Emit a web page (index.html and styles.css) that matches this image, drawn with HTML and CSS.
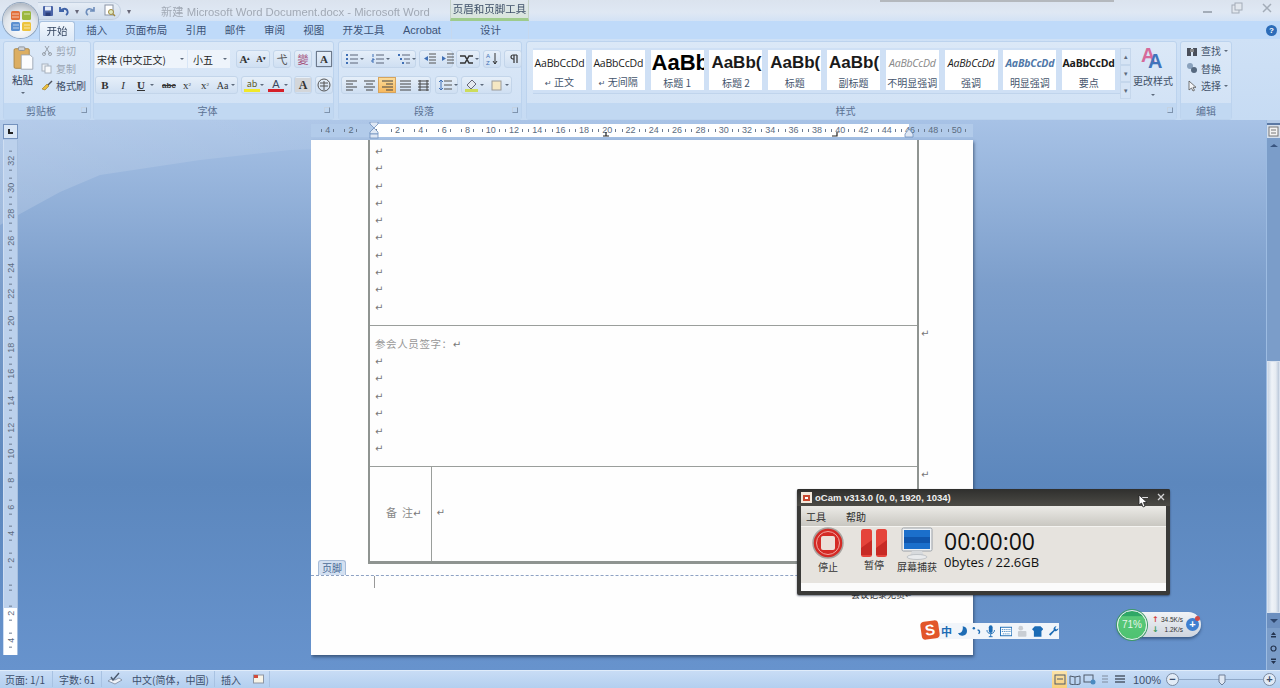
FILE: index.html
```html
<!DOCTYPE html>
<html lang="zh-CN">
<head>
    <meta charset="UTF-8">
    <meta name="viewport" content="width=device-width, initial-scale=1.0">
    <title>新建 Microsoft Word Document.docx - Microsoft Word</title>
    <link rel="stylesheet" href="styles.css">
</head>
<body>
<div class="app">
    <!-- title bar -->
    <header class="titlebar">
        <div class="orb">
            <svg width="28" height="28" viewBox="0 0 28 28">
                <rect x="4" y="4" width="9" height="9" rx="1.5" fill="#e2703a"/>
                <rect x="15" y="4" width="9" height="9" rx="1.5" fill="#9bb83f"/>
                <rect x="4" y="15" width="9" height="9" rx="1.5" fill="#5b8fd0"/>
                <rect x="15" y="15" width="9" height="9" rx="1.5" fill="#edc33c"/>
                <path d="M5 7h7M5 10h7M17 7h6M17 18h6M17 21h6M6 18h6M6 21h6" stroke="#fff" stroke-opacity=".6"/>
            </svg>
        </div>
        <div class="qat">
            <svg width="12" height="12" viewBox="0 0 12 12"><rect x="1" y="1" width="10" height="10" rx="1" fill="#4a64a8"/><rect x="3" y="1.5" width="6" height="4" fill="#e8eef8"/><rect x="3.5" y="7.5" width="5" height="3.5" fill="#2c3f78"/></svg>
            <svg width="13" height="12" viewBox="0 0 13 12"><path d="M2 2v4h4M2.500 6c2-3 6-3 7 0 .5 1.500 0 3-1.500 4" fill="none" stroke="#3f63a8" stroke-width="1.800"/></svg>
            <span class="qat-arrow">▾</span>
            <svg width="13" height="12" viewBox="0 0 13 12"><path d="M11 2v4H7M10.500 6c-2-3-6-3-7 0-.5 1.500 0 3 1.500 4" fill="none" stroke="#6d8dbb" stroke-width="1.600"/></svg>
            <svg class="qat-preview" width="13" height="13" viewBox="0 0 13 13"><rect x="2" y="1" width="8" height="10" fill="#fff" stroke="#8a94a5"/><circle cx="8" cy="8" r="2.500" fill="#dfe8c0" stroke="#a08a40"/><path d="M10 10l2 2" stroke="#a08a40" stroke-width="1.500"/></svg>
        </div>
        <span class="qat-more">▾</span>
        <div class="doc-title">新建 Microsoft Word Document.docx - Microsoft Word</div>
        <div class="context-title">页眉和页脚工具</div>
        <div class="top-shadow"></div>
        <div class="win-controls">
            <span class="win-min"></span>
            <svg width="12" height="12" viewBox="0 0 12 12"><rect x="1" y="3" width="7" height="8" fill="#e2e7ee" stroke="#a3acb8"/><rect x="4" y="1" width="7" height="7" fill="#e2e7ee" stroke="#a3acb8"/></svg>
            <svg width="10" height="10" viewBox="0 0 10 10"><path d="M1 1l8 8M9 1l-8 8" stroke="#a3acb8" stroke-width="1.500"/></svg>
        </div>
    </header>

    <!-- tabs -->
    <nav class="tabs">
        <span class="tab tab-active">开始</span>
        <span class="tab tab-w39">插入</span>
        <span class="tab tab-w60">页面布局</span>
        <span class="tab tab-w39">引用</span>
        <span class="tab tab-w39">邮件</span>
        <span class="tab tab-w39">审阅</span>
        <span class="tab tab-w39">视图</span>
        <span class="tab tab-w60">开发工具</span>
        <span class="tab tab-w58">Acrobat</span>
        <span class="tab tab-design">设计</span>
        <span class="help">?</span>
    </nav>

    <!-- ribbon -->
    <section class="ribbon">
        <div class="group g-clip">
            <div class="group-body clip-body">
                <div class="paste">
                    <svg width="22" height="25" viewBox="0 0 24 28"><rect x="2" y="3" width="17" height="22" rx="1.500" fill="#dcae62" stroke="#a98545"/><rect x="7" y="1" width="7" height="4" rx="1" fill="#cfd3d8" stroke="#8a8f96"/><path d="M10 10h10l3 3v13H10z" fill="#fbfcfe" stroke="#9aa4b2"/></svg>
                    <span>粘贴</span>
                    <i class="mini-arrow"></i>
                </div>
                <div class="clip-list">
                    <span class="clip-item off"><svg width="12" height="11" viewBox="0 0 12 11"><path d="M3 9l5-8M9 9L4 1" stroke="#9aa2ac" fill="none"/><circle cx="3" cy="9" r="1.500" fill="none" stroke="#9aa2ac"/><circle cx="9" cy="9" r="1.500" fill="none" stroke="#9aa2ac"/></svg>剪切</span>
                    <span class="clip-item off"><svg width="12" height="11" viewBox="0 0 12 11"><rect x="1" y="1" width="6" height="7" fill="#eef2f7" stroke="#a8b2be"/><rect x="4" y="3" width="6" height="7" fill="#f7f9fb" stroke="#a8b2be"/></svg>复制</span>
                    <span class="clip-item"><svg width="12" height="11" viewBox="0 0 12 11"><path d="M11 1L6 6" stroke="#50545e" stroke-width="1.500"/><path d="M6 4L1 9l3 1 4-4z" fill="#e9bd3d" stroke="#97772a" stroke-width=".6"/></svg>格式刷</span>
                </div>
            </div>
            <div class="group-label">剪贴板<i class="launcher"></i></div>
        </div>

        <div class="group g-font">
            <div class="group-body rows">
                <div class="row">
                    <div class="field field-font">宋体 (中文正文)<i class="mini-arrow"></i></div>
                    <div class="field field-size">小五<i class="mini-arrow"></i></div>
                    <div class="btn-set set-grow"><b class="rb rb-serif">A<sup>▴</sup></b><b class="rb rb-serif rb-sm">A<sup>▾</sup></b></div>
                    <div class="btn-set set-one"><span class="rb rb-cjk">弋</span></div>
                    <div class="btn-set set-one"><span class="rb rb-cjk rb-pink">變</span></div>
                    <div class="btn-set set-one"><span class="rb rb-boxed">A</span></div>
                </div>
                <div class="row">
                    <div class="btn-set set-format">
                        <b class="rb rb-serif">B</b><i class="rb rb-serif">I</i><b class="rb rb-serif rb-u">U</b><i class="mini-arrow arrow-gap"></i>
                        <span class="rb rb-strike">abc</span><span class="rb rb-serif">x<sub>2</sub></span><span class="rb rb-serif">x<sup>2</sup></span><span class="rb rb-serif rb-aa">Aa</span><i class="mini-arrow"></i>
                    </div>
                    <div class="btn-set set-color">
                        <span class="rb rb-high">ab</span><i class="mini-arrow arrow-gap4"></i>
                        <span class="rb rb-red">A</span><i class="mini-arrow"></i>
                    </div>
                    <div class="btn-set set-one"><span class="rb rb-shade">A</span></div>
                    <div class="btn-set set-one">
                        <span class="rb"><svg width="14" height="14" viewBox="0 0 14 14"><circle cx="7" cy="7" r="6" fill="none" stroke="#555"/><path d="M3 5h8M3 8h8M7 3v9" stroke="#555"/></svg></span>
                    </div>
                </div>
            </div>
            <div class="group-label">字体<i class="launcher"></i></div>
        </div>

        <div class="group g-para">
            <div class="group-body rows">
                <div class="row">
                    <div class="btn-set set-lists">
                        <span class="rb"><svg width="13" height="12" viewBox="0 0 13 12"><path d="M5 2h8M5 6h8M5 10h8" stroke="#5a6478"/><path d="M1 2h2M1 6h2M1 10h2" stroke="#3f6fb5" stroke-width="2"/></svg></span><i class="mini-arrow arrow-gap4"></i>
                        <span class="rb"><svg width="13" height="12" viewBox="0 0 13 12"><path d="M5 2h8M5 6h8M5 10h8" stroke="#5a6478"/><path d="M2 1v3M1 6h2v1H1v2h2" stroke="#3f6fb5" fill="none"/></svg></span><i class="mini-arrow arrow-gap4"></i>
                        <span class="rb"><svg width="13" height="12" viewBox="0 0 13 12"><path d="M5 2h8M7 6h6M9 10h4" stroke="#5a6478"/><path d="M1 2h2M3 6h2M5 10h2" stroke="#3f6fb5" stroke-width="2"/></svg></span><i class="mini-arrow"></i>
                    </div>
                    <div class="btn-set set-indent">
                        <span class="rb"><svg width="13" height="12" viewBox="0 0 13 12"><path d="M6 1h7M6 4h7M6 7h7M6 10h7" stroke="#555"/><path d="M5 3L1 5.500 5 8z" fill="#3f6fb5"/></svg></span>
                        <span class="rb"><svg width="13" height="12" viewBox="0 0 13 12"><path d="M6 1h7M6 4h7M6 7h7M6 10h7" stroke="#555"/><path d="M1 3l4 2.500L1 8z" fill="#3f6fb5"/></svg></span>
                    </div>
                    <div class="btn-set set-x">
                        <span class="rb"><svg width="14" height="12" viewBox="0 0 14 12"><path d="M1 3h5l4 7h4M1 10h5l4-7h4" fill="none" stroke="#333" stroke-width="1.500"/></svg></span><i class="mini-arrow"></i>
                    </div>
                    <div class="btn-set set-sort">
                        <span class="rb"><svg width="14" height="14" viewBox="0 0 14 14"><text x="1" y="6" font-size="6" font-family="Liberation Sans" fill="#3f6fb5">A</text><text x="1" y="13" font-size="6" font-family="Liberation Sans" fill="#3f6fb5">Z</text><path d="M10 1v11M8 9l2 3 2-3" fill="none" stroke="#333"/></svg></span>
                    </div>
                    <div class="btn-set set-sort">
                        <span class="rb"><svg width="12" height="12" viewBox="0 0 12 12"><path d="M7 2v8M10 2v8M10 2H6a2 2 0 0 0 0 4h1" fill="none" stroke="#333" stroke-width="1.200"/></svg></span>
                    </div>
                </div>
                <div class="row">
                    <div class="btn-set set-align">
                        <span class="rb"><svg width="13" height="11" viewBox="0 0 13 11"><path d="M1 1h11M1 4h7M1 7h11M1 10h7" stroke="#444" stroke-width="1.200"/></svg></span>
                        <span class="rb"><svg width="13" height="11" viewBox="0 0 13 11"><path d="M1 1h11M3 4h7M1 7h11M3 10h7" stroke="#444" stroke-width="1.200"/></svg></span>
                        <span class="rb rb-on"><svg width="13" height="11" viewBox="0 0 13 11"><path d="M1 1h11M5 4h7M1 7h11M5 10h7" stroke="#444" stroke-width="1.200"/></svg></span>
                        <span class="rb"><svg width="13" height="11" viewBox="0 0 13 11"><path d="M1 1h11M1 4h11M1 7h11M1 10h11" stroke="#444" stroke-width="1.200"/></svg></span>
                        <span class="rb"><svg width="13" height="11" viewBox="0 0 13 11"><path d="M1 1h11M1 4h11M1 7h11M1 10h11M3 0v11M10 0v11" stroke="#444"/></svg></span>
                    </div>
                    <div class="btn-set set-spacing">
                        <span class="rb"><svg width="14" height="12" viewBox="0 0 14 12"><path d="M6 2h8M6 6h8M6 10h8" stroke="#555"/><path d="M3 1v10M1 3l2-2 2 2M1 9l2 2 2-2" fill="none" stroke="#3f6fb5"/></svg></span><i class="mini-arrow"></i>
                    </div>
                    <div class="btn-set set-shade">
                        <span class="rb"><svg width="15" height="14" viewBox="0 0 15 14"><path d="M3 7l5-5 4 4-5 5z" fill="#e4e8ee" stroke="#667"/><rect x="1" y="11" width="13" height="3" fill="#cddc5b"/></svg></span><i class="mini-arrow arrow-gap3"></i>
                        <span class="rb"><svg width="13" height="13" viewBox="0 0 13 13"><rect x="2" y="2" width="9" height="9" fill="#f5e7c3" stroke="#9a9a9a"/></svg></span><i class="mini-arrow"></i>
                    </div>
                </div>
            </div>
            <div class="group-label">段落<i class="launcher"></i></div>
        </div>

        <div class="group g-styles">
            <div class="group-body styles-body">
                <div class="gallery">
                    <div class="style-card"><span class="sample s-normal">AaBbCcDd</span><span class="style-name"><i class="enter">↵</i> 正文</span></div>
                    <div class="style-card"><span class="sample s-normal">AaBbCcDd</span><span class="style-name"><i class="enter">↵</i> 无间隔</span></div>
                    <div class="style-card"><span class="sample s-h1">AaBb</span><span class="style-name">标题 1</span></div>
                    <div class="style-card"><span class="sample s-h2">AaBb(</span><span class="style-name">标题 2</span></div>
                    <div class="style-card"><span class="sample s-h2">AaBb(</span><span class="style-name">标题</span></div>
                    <div class="style-card"><span class="sample s-h2">AaBb(</span><span class="style-name">副标题</span></div>
                    <div class="style-card"><span class="sample s-normal s-subtle">AaBbCcDd</span><span class="style-name">不明显强调</span></div>
                    <div class="style-card"><span class="sample s-normal s-em">AaBbCcDd</span><span class="style-name">强调</span></div>
                    <div class="style-card"><span class="sample s-normal s-intense">AaBbCcDd</span><span class="style-name">明显强调</span></div>
                    <div class="style-card"><span class="sample s-normal s-strong">AaBbCcDd</span><span class="style-name">要点</span></div>
                </div>
                <div class="gallery-scroll">
                    <span>▴</span><span>▾</span><span>▾</span>
                </div>
                <div class="change-style">
                    <svg width="24" height="26" viewBox="0 0 24 26"><text x="0" y="17" font-size="20" font-weight="700" font-family="Liberation Sans" fill="#d66a9a">A</text><text x="7" y="23" font-size="20" font-weight="700" font-family="Liberation Sans" fill="#3f74bb">A</text></svg>
                    <span>更改样式</span>
                    <i class="mini-arrow"></i>
                </div>
            </div>
            <div class="group-label">样式<i class="launcher"></i></div>
        </div>

        <div class="group g-edit">
            <div class="group-body edit-body">
                <span class="edit-item"><svg width="12" height="12" viewBox="0 0 12 12"><rect x="1" y="3" width="4" height="8" fill="#4a4f5a"/><rect x="7" y="3" width="4" height="8" fill="#4a4f5a"/><rect x="4" y="4" width="4" height="3" fill="#888"/></svg>查找<i class="mini-arrow"></i></span>
                <span class="edit-item"><svg width="12" height="12" viewBox="0 0 12 12"><circle cx="4" cy="4" r="3" fill="#8aa2bd"/><circle cx="8" cy="8" r="3" fill="#56697f"/></svg>替换</span>
                <span class="edit-item"><svg width="12" height="12" viewBox="0 0 12 12"><path d="M3 1v9l2.500-2 1.500 3 1.500-.7-1.500-3H10z" fill="#f4f6f9" stroke="#555" stroke-width=".8"/></svg>选择<i class="mini-arrow"></i></span>
            </div>
            <div class="group-label label-plain">编辑</div>
        </div>
    </section>

    <!-- document area -->
    <main class="work">
        <div class="swoosh"></div>
        <div class="left-rail">
            <div class="tab-stop"><span></span></div>
            <div class="vruler">
                <span>32</span><span>30</span><span>28</span><span>26</span><span>24</span><span>22</span><span>20</span><span>18</span><span>16</span><span>14</span><span>12</span><span>10</span><span>8</span><span>6</span><span>4</span><span>2</span><span></span><span>2</span><span>4</span>
            </div>
        </div>
        <div class="doc-col">
            <div class="hruler">
                <span>4</span><span>2</span><span></span><span>2</span><span>4</span><span>6</span><span>8</span><span>10</span><span>12</span><span>14</span><span>16</span><span>18</span><span>20</span><span>22</span><span>24</span><span>26</span><span>28</span><span>30</span><span>32</span><span>34</span><span>36</span><span>38</span><span>40</span><span>42</span><span>44</span><span>46</span><span>48</span><span>50</span>
                <svg class="marker marker-indent" width="10" height="17" viewBox="0 0 10 17"><path d="M1 0h8v2L5 6 1 2zM5 6l4 4v2H1v-2z" fill="#dfe8f5" stroke="#6e8fbd" stroke-width=".8"/><rect x="1" y="12" width="8" height="4" fill="#dfe8f5" stroke="#6e8fbd" stroke-width=".8"/></svg>
                <svg class="marker marker-tab1" width="6" height="5" viewBox="0 0 6 5"><path d="M3 0v4M0 4h6" stroke="#222" stroke-width="1.200"/></svg>
                <svg class="marker marker-tab2" width="6" height="5" viewBox="0 0 6 5"><path d="M5 0v4H0" fill="none" stroke="#222" stroke-width="1.200"/></svg>
                <svg class="marker marker-right" width="10" height="9" viewBox="0 0 10 9"><path d="M5 0l4 5v3H1V5z" fill="#dfe8f5" stroke="#6e8fbd" stroke-width=".8"/></svg>
            </div>
            <div class="page">
                <div class="body-part">
                    <table class="sheet">
                        <colgroup><col class="col-head"><col></colgroup>
                        <tr class="row-top">
                            <td colspan="2">
                                <p class="mark">↵</p><p class="mark">↵</p><p class="mark">↵</p><p class="mark">↵</p><p class="mark">↵</p>
                                <p class="mark">↵</p><p class="mark">↵</p><p class="mark">↵</p><p class="mark">↵</p><p class="mark">↵</p>
                            </td>
                        </tr>
                        <tr class="row-sign">
                            <td colspan="2">
                                <p class="sign-title">参会人员签字：<i>↵</i></p>
                                <p class="mark">↵</p><p class="mark">↵</p><p class="mark">↵</p><p class="mark">↵</p><p class="mark">↵</p><p class="mark">↵</p>
                            </td>
                        </tr>
                        <tr class="row-note">
                            <td class="note-head">备&nbsp;&nbsp;注<i>↵</i></td>
                            <td class="note-cell"><i>↵</i></td>
                        </tr>
                    </table>
                    <span class="row-end end-sign">↵</span>
                    <span class="row-end end-note">↵</span>
                </div>
                <div class="footer-part">
                    <span class="footer-tab">页脚</span>
                    <div class="footer-rule"></div>
                    <div class="caret"></div>
                    <p class="footer-text">会议记录无责↵</p>
                </div>
            </div>
        </div>
        <aside class="scrollbar">
            <span class="split"></span>
            <span class="ruler-toggle"><svg width="11" height="11" viewBox="0 0 11 11"><rect x="1" y="1" width="9" height="9" fill="#f3f3f3" stroke="#777"/><path d="M3 4h5M3 7h5" stroke="#777"/></svg></span>
            <span class="sb-arrow sb-up"></span>
            <span class="sb-track sb-track-top"></span>
            <span class="sb-thumb"></span>
            <span class="sb-down"><i></i></span>
            <span class="sb-dot"><svg width="7" height="7" viewBox="0 0 7 7"><path d="M3.500 1L6 4H1zM1 5h5v1.500H1z" fill="#24344f"/></svg></span>
            <span class="sb-dot"><svg width="7" height="7" viewBox="0 0 7 7"><circle cx="3.500" cy="3.500" r="2.500" fill="none" stroke="#24344f" stroke-width="1.200"/></svg></span>
            <span class="sb-dot"><svg width="7" height="7" viewBox="0 0 7 7"><path d="M3.500 6L6 3H1zM1 .5h5V2H1z" fill="#24344f"/></svg></span>
        </aside>

        <!-- floating windows on top of Word -->
        <div class="ocam">
            <div class="ocam-title">
                <svg width="11" height="11" viewBox="0 0 11 11"><rect width="11" height="11" fill="#f3e9dc"/><rect x="2" y="3" width="7" height="6" fill="#c8482e"/><rect x="4" y="5" width="3" height="2" fill="#fff"/></svg>
                <span>oCam v313.0 (0, 0, 1920, 1034)</span>
                <em class="ocam-min"></em>
                <svg class="ocam-close" width="8" height="8" viewBox="0 0 8 8"><path d="M1 1l6 6M7 1L1 7" stroke="#d5d5d5" stroke-width="1.300"/></svg>
            </div>
            <div class="ocam-menu"><span>工具</span><span>帮助</span></div>
            <div class="ocam-tools">
                <div class="ocam-btn btn-stop">
                    <svg width="32" height="32" viewBox="0 0 32 32"><circle cx="16" cy="16" r="15" fill="#d42a25" stroke="#a8a4a0" stroke-width="1.500"/><circle cx="16" cy="16" r="11.500" fill="none" stroke="#f3a5a0"/><rect x="9" y="9" width="14" height="14" rx="2" fill="#ecdfd8"/></svg>
                    <span>停止</span>
                </div>
                <div class="ocam-btn btn-pause">
                    <svg width="26" height="30" viewBox="0 0 26 30"><rect x="0" y="1" width="11" height="28" rx="2.500" fill="#e5443b"/><rect x="15" y="1" width="11" height="28" rx="2.500" fill="#e5443b"/><path d="M0 20l11-8v15H0zM15 20l11-8v15H15z" fill="#c72a25"/></svg>
                    <span>暂停</span>
                </div>
                <div class="ocam-btn btn-screen">
                    <svg width="32" height="33" viewBox="0 0 32 33"><rect x="1" y="1" width="30" height="23" rx="1.500" fill="#f0f2f4" stroke="#9aa0a6"/><rect x="3" y="3" width="26" height="19" fill="#1b6fcb"/><rect x="3" y="10" width="26" height="6" fill="#0f55ac"/><path d="M11 24h10l2 5H9z" fill="#d7dadd"/><ellipse cx="16" cy="30" rx="10" ry="2.500" fill="#e9ebed" stroke="#a8adb2" stroke-width=".6"/></svg>
                    <span>屏幕捕获</span>
                </div>
                <div class="ocam-status">
                    <div class="ocam-time">00:00:00</div>
                    <div class="ocam-size">0bytes / 22.6GB</div>
                </div>
            </div>
            <div class="ocam-strip"></div>
        </div>
        <svg class="cursor" width="10" height="14" viewBox="0 0 10 14"><path d="M1 1v10l2.500-2 1.500 4 2-.8-1.500-3.700H9z" fill="#fff" stroke="#222" stroke-width=".8"/></svg>

        <div class="sogou">
            <span class="sogou-logo">S</span>
            <span class="sogou-cn">中</span>
            <svg width="11" height="12" viewBox="0 0 11 12"><path d="M6 1a5 5 0 1 1-5 7c3 1 6-2 5-7z" fill="#1d6cb5"/></svg>
            <svg width="11" height="12" viewBox="0 0 11 12"><circle cx="3" cy="3" r="1.300" fill="#1d6cb5"/><path d="M7 5c2 0 3 2 1 4" fill="none" stroke="#1d6cb5" stroke-width="1.500"/></svg>
            <svg width="10" height="13" viewBox="0 0 10 13"><rect x="3" y="0" width="4" height="8" rx="2" fill="#1d6cb5"/><path d="M1 5c0 5 8 5 8 0M5 9v3M3 12h4" fill="none" stroke="#1d6cb5"/></svg>
            <svg width="13" height="11" viewBox="0 0 13 11"><rect x=".5" y="1" width="12" height="9" fill="#fff" stroke="#1d6cb5"/><path d="M2 3.500h9M2 5.500h9M3 8h7" stroke="#1d6cb5" stroke-dasharray="1 1"/></svg>
            <svg width="11" height="12" viewBox="0 0 11 12"><circle cx="4" cy="3" r="2.500" fill="#c9ced4"/><rect x="1" y="6" width="9" height="6" rx="1" fill="#c9ced4"/></svg>
            <svg width="12" height="11" viewBox="0 0 12 11"><path d="M3 0h6l3 3-2 2v6H2V5L0 3z" fill="#1d6cb5"/></svg>
            <svg width="12" height="12" viewBox="0 0 12 12"><path d="M11 3a3 3 0 0 1-4 3L2.500 11 1 9.500 6 5a3 3 0 0 1 3-4L7.500 3 9 4.500z" fill="#1d6cb5"/></svg>
        </div>

        <div class="net">
            <div class="net-ball">71%</div>
            <div class="net-rates">
                <span><i class="up">↑</i>34.5K/s</span>
                <span><i class="down">↓</i>1.2K/s</span>
            </div>
            <span class="net-plus">+</span>
        </div>
    </main>

    <!-- status bar -->
    <footer class="status">
        <span class="st st-page">页面: 1/1</span>
        <span class="st st-count">字数: 61</span>
        <span class="st st-check"><svg width="16" height="14" viewBox="0 0 16 14"><path d="M1 9l7 3 7-4-3-2-4 2-4-1z" fill="#eef2f8" stroke="#6b7a90" stroke-width=".7"/><path d="M4 5l2 3 6-7" fill="none" stroke="#4c5a6e" stroke-width="1.400"/></svg></span>
        <span class="st st-lang">中文(简体，中国)</span>
        <span class="st st-insert">插入<svg width="11" height="10" viewBox="0 0 11 10"><rect x=".5" y="1" width="10" height="8" fill="#f7f4e8" stroke="#8e96a3"/><rect x="1" y="1" width="4" height="3" fill="#d24a3a"/></svg></span>
        <div class="st-right">
            <div class="views">
                <span class="view view-on"><svg width="12" height="11" viewBox="0 0 12 11"><rect x="1" y="1" width="10" height="9" fill="none" stroke="#4f5a6b"/><path d="M3 5h6" stroke="#4f5a6b"/></svg></span>
                <span class="view"><svg width="12" height="11" viewBox="0 0 12 11"><path d="M1 2l5 1 5-1v8l-5 1-5-1zM6 3v8" fill="none" stroke="#4f5a6b"/></svg></span>
                <span class="view"><svg width="13" height="11" viewBox="0 0 13 11"><rect x="1" y="1" width="9" height="7" fill="none" stroke="#4f5a6b"/><circle cx="10" cy="8" r="2.500" fill="#4a8ac0"/></svg></span>
                <span class="view"><svg width="12" height="11" viewBox="0 0 12 11"><path d="M3 2h6M3 5h6M3 8h6" stroke="#7f8a9c"/></svg></span>
                <span class="view"><svg width="12" height="11" viewBox="0 0 12 11"><path d="M1 2h10M1 5h10M1 8h10" stroke="#4f5a6b" stroke-width="1.500"/></svg></span>
            </div>
            <span class="zoom-pct">100%</span>
            <span class="zoom-btn">−</span>
            <div class="zoom-slider"><svg width="8" height="12" viewBox="0 0 8 12"><path d="M1 1h6v7l-3 3-3-3z" fill="#dfe7f2" stroke="#6e7f98"/></svg></div>
            <span class="zoom-btn">+</span>
        </div>
    </footer>
</div>
</body>
</html>
```

FILE: styles.css
```css
* {
    box-sizing: border-box;
}
html, body {
    margin: 0;
    padding: 0;
    overflow: hidden;
}
i {
    font-style: normal;
}
p {
    margin: 0;
}
.app {
    width: 1280px;
    height: 688px;
    display: flex;
    flex-direction: column;
    overflow: hidden;
    font-family: "Noto Sans CJK SC", "Liberation Sans", sans-serif;
    font-size: 10px;
    color: #44546c;
    filter: blur(0.5px);
}

/* title bar */
.titlebar {
    position: relative;
    height: 21px;
    flex-shrink: 0;
    background: linear-gradient(#dbe3ee, #dfe8f4 60%, #d3e2f5);
    display: flex;
    align-items: center;
}
.orb {
    position: absolute;
    left: 3px;
    top: 3px;
    width: 35px;
    height: 35px;
    z-index: 3;
    border-radius: 50%;
    display: flex;
    align-items: center;
    justify-content: center;
    background: radial-gradient(circle at 50% 70%, #fff, #dfe4ea 55%, #8d96a3);
    box-shadow: 0 0 0 1px #8fa3bb;
}
.qat {
    margin-left: 38px;
    width: 83px;
    height: 18px;
    padding-left: 4px;
    display: flex;
    align-items: center;
    gap: 4px;
    border-radius: 0 10px 10px 0;
    background: linear-gradient(#e6edf6, #cfdcec);
    border: 1px solid #c2cfdf;
    border-left: none;
}
.qat-arrow, .qat-more {
    font-size: 8px;
    color: #667;
}
.qat-preview {
    margin-left: 3px;
}
.qat-more {
    margin-left: 6px;
}
.doc-title {
    margin-left: 30px;
    width: 270px;
    font-family: "Liberation Sans", "Noto Sans CJK SC", sans-serif;
    font-size: 11.3px;
    color: #a1a9b5;
    white-space: nowrap;
}
.context-title {
    margin-left: 19px;
    width: 79px;
    height: 21px;
    font-size: 10.500px;
    line-height: 18px;
    text-align: center;
    color: #3d4f68;
    background: linear-gradient(#dfe7ee, #d9e5dc);
    border-bottom: 3px solid #9ecb8c;
    border-left: 1px solid #c5d2c8;
    border-right: 1px solid #c5d2c8;
}
.top-shadow {
    position: absolute;
    left: 880px;
    top: 0;
    width: 234px;
    height: 2px;
    background: #b4b8bd;
}
.win-controls {
    position: absolute;
    right: 8px;
    top: 2px;
    display: flex;
    align-items: center;
    gap: 19px;
}
.win-min {
    width: 9px;
    height: 2px;
    margin-top: 8px;
    background: #a3acb8;
}

/* tabs */
.tabs {
    height: 18px;
    flex-shrink: 0;
    padding-left: 39px;
    display: flex;
    background: #bfdaf9;
    position: relative;
    font-size: 10.500px;
    color: #3c5377;
}
.tab {
    text-align: center;
    line-height: 18px;
    white-space: nowrap;
}
.tab-active {
    width: 36px;
    height: 20px;
    background: linear-gradient(#f2f7fd, #dbe8f7);
    border: 1px solid #a9c2e0;
    border-bottom: none;
    border-radius: 3px 3px 0 0;
    color: #33445f;
    margin-right: 2px;
    position: relative;
    z-index: 2;
}
.tab-w39 {
    width: 39.3px;
}
.tab-w60 {
    width: 60px;
}
.tab-w58 {
    width: 57px;
    font-family: "Liberation Sans", sans-serif;
    font-size: 11px;
}
.tab-design {
    width: 78px;
    margin-left: 1px;
    border-left: 1px solid #c5d8ef;
    border-right: 1px solid #c5d8ef;
}
.help {
    position: absolute;
    right: 3px;
    top: 4px;
    width: 11px;
    height: 11px;
    border-radius: 50%;
    background: #2c6cb8;
    color: #fff;
    font-size: 8px;
    line-height: 11px;
    text-align: center;
    font-family: "Liberation Sans", sans-serif;
    font-weight: 700;
}

/* ribbon */
.ribbon {
    height: 81px;
    flex-shrink: 0;
    padding: 2px 0 0 3px;
    display: flex;
    background: linear-gradient(#cfe1f6, #c6dbf3);
}
.group {
    display: flex;
    flex-direction: column;
    margin-right: 3px;
    border-radius: 3px;
    border: 1px solid #bcd3ee;
    background: linear-gradient(#dbe8f7, #d0e1f5);
}
.g-clip {
    width: 88px;
    margin-right: 2px;
}
.g-font {
    width: 241px;
    margin-right: 4px;
}
.g-para {
    width: 184px;
    margin-right: 4px;
}
.g-styles {
    width: 651px;
}
.g-edit {
    width: 52px;
}
.group-body {
    flex: 1;
    min-height: 0;
}
.group-label {
    position: relative;
    height: 16px;
    line-height: 16px;
    text-align: center;
    padding-right: 12px;
    color: #5a7192;
    background: #c1d8f2;
}
.launcher {
    position: absolute;
    right: 3px;
    top: 4px;
    width: 6px;
    height: 6px;
    border: 1px solid #7e93ad;
    border-top-color: #c4d2e2;
    border-left-color: #c4d2e2;
}
.mini-arrow {
    display: inline-block;
    width: 0;
    height: 0;
    border-left: 2px solid transparent;
    border-right: 2px solid transparent;
    border-top: 2px solid #5d6a7c;
    flex-shrink: 0;
}
.arrow-gap {
    margin-right: 6px;
}
.arrow-gap4 {
    margin-right: 4px;
}
.arrow-gap3 {
    margin-right: 3px;
}

/* clipboard group */
.clip-body {
    display: flex;
}
.paste {
    width: 37px;
    padding-top: 4px;
    display: flex;
    flex-direction: column;
    align-items: center;
    font-size: 10.500px;
    color: #33445f;
    line-height: 14px;
}
.paste svg {
    margin-bottom: 2px;
}
.paste .mini-arrow {
    margin-top: 5px;
}
.clip-list {
    padding-top: 0;
    display: flex;
    flex-direction: column;
}
.clip-item {
    height: 17.5px;
    display: flex;
    align-items: center;
    gap: 3px;
    color: #3f4f67;
}
.clip-item.off {
    color: #9aa5b3;
}

/* small button rows */
.rows {
    display: flex;
    flex-direction: column;
    gap: 8px;
    padding: 8px 0 0 1px;
}
.row {
    display: flex;
    gap: 3px;
    height: 18px;
    align-items: stretch;
}
.field {
    display: flex;
    align-items: center;
    justify-content: space-between;
    padding: 0 3px 0 2px;
    background: #eef4fb;
    color: #222;
    font-size: 10px;
    white-space: nowrap;
    flex-shrink: 0;
}
.field-font {
    width: 92px;
    margin-right: -2px;
}
.field-size {
    width: 42px;
    margin-right: 3px;
    padding-left: 5px;
}
.btn-set {
    display: flex;
    align-items: center;
    flex-shrink: 0;
    border: 1px solid #c3d5ea;
    border-radius: 3px;
    background: linear-gradient(#e6eff9, #cfdff2);
}
.set-grow {
    width: 34px;
}
.set-grow .rb {
    width: 16px;
}
.set-one {
    width: 18px;
}
.set-one .rb {
    width: 16px;
}
.set-format {
    width: 143px;
}
.set-color {
    width: 51px;
    margin-right: -1px;
}
.set-lists {
    width: 75px;
    margin-left: 1px;
}
.set-indent {
    width: 34px;
}
.set-x {
    width: 24px;
}
.set-sort {
    width: 18px;
}
.set-sort .rb {
    width: 16px;
}
.set-align {
    width: 90px;
    margin-left: 1px;
    margin-right: 1px;
}
.set-spacing {
    width: 23px;
}
.set-shade {
    width: 51px;
}
.rb {
    width: 18px;
    height: 16px;
    display: flex;
    align-items: center;
    justify-content: center;
    flex-shrink: 0;
    color: #333;
    font-style: normal;
    font-size: 10px;
}
.rb sub, .rb sup {
    font-size: 5px;
    line-height: 0;
}
.rb-serif {
    font-family: "Liberation Serif", serif;
    font-size: 11px;
}
i.rb-serif {
    font-style: italic;
}
.rb-sm {
    font-size: 9px;
}
.rb-u {
    text-decoration: underline;
}
.rb-aa {
    font-size: 10px;
    width: 17px;
}
.rb-strike {
    font-size: 8px;
    font-family: "Liberation Sans", sans-serif;
    font-weight: 700;
    text-decoration: line-through;
}
.rb-cjk {
    font-size: 11px;
    color: #555;
}
.rb-pink {
    color: #a44f7a;
}
.rb-boxed {
    font-family: "Liberation Serif", serif;
    font-size: 11px;
    font-weight: 700;
    margin: 0 auto;
    border: 1px solid #6d7a8c;
}
.rb-high {
    width: 16px;
    margin-left: 2px;
    font-size: 9px;
    color: #5d5d2a;
    border-bottom: 3px solid #f0e82a;
    height: 14px;
}
.rb-red {
    width: 16px;
    height: 14px;
    font-size: 11px;
    font-family: "Liberation Sans", sans-serif;
    color: #3a4760;
    border-bottom: 3px solid #d5202a;
}
.rb-shade {
    font-family: "Liberation Serif", serif;
    font-size: 12px;
    font-weight: 700;
    background: #d3d6da;
    height: 14px;
}
.rb-on {
    background: linear-gradient(#fbdc9a, #f8b95e);
    border: 1px solid #d6a45e;
}

/* styles gallery */
.styles-body {
    display: flex;
    padding: 6px 0 0 6px;
}
.gallery {
    width: 587px;
    height: 46px;
    display: flex;
    gap: 5.800px;
    padding-top: 2px;
    background: #cfe0f5;
    border-bottom: 1px solid #c0d4ec;
}
.style-card {
    width: 53px;
    height: 40px;
    background: #fff;
    display: flex;
    flex-direction: column;
    align-items: center;
    overflow: hidden;
    white-space: nowrap;
}
.sample {
    height: 26px;
    line-height: 26px;
    color: #1a1a1a;
    font-family: "Open Sans", "Liberation Sans", sans-serif;
    width: 100%;
    text-align: center;
    overflow: hidden;
}
.s-normal {
    font-size: 10.500px;
    letter-spacing: -0.2px;
}
.s-h1 {
    font-size: 22px;
    font-weight: 600;
    font-family: "Liberation Sans", sans-serif;
    text-align: left;
    padding-left: 1px;
    color: #000;
}
.s-h2 {
    font-size: 17px;
    font-weight: 600;
    font-family: "Liberation Sans", sans-serif;
    text-align: left;
    padding-left: 2px;
}
.s-subtle {
    font-style: italic;
    color: #888;
}
.s-em {
    font-style: italic;
}
.s-intense {
    font-style: italic;
    font-weight: 700;
    color: #5078a8;
}
.s-strong {
    font-weight: 700;
}
.style-name {
    font-size: 10px;
    line-height: 13px;
    color: #44546c;
}
.enter {
    font-size: 8px;
    font-family: "DejaVu Sans", sans-serif;
}
.gallery-scroll {
    width: 11px;
    height: 46px;
    display: flex;
    flex-direction: column;
    background: #d6e4f5;
    font-size: 7px;
    color: #5d6a7c;
    text-align: center;
}
.gallery-scroll span {
    flex: 1;
    line-height: 15px;
    border: 1px solid #c5d7ec;
}
.change-style {
    width: 42px;
    margin-left: 1px;
    margin-top: -3px;
    display: flex;
    flex-direction: column;
    align-items: center;
    color: #3f4f67;
    line-height: 13px;
    white-space: nowrap;
}
.change-style svg {
    margin-bottom: 3px;
}
.change-style .mini-arrow {
    margin-top: 7px;
}
.edit-body {
    padding: 0 0 0 5px;
    display: flex;
    flex-direction: column;
}
.edit-item {
    height: 17.5px;
    display: flex;
    align-items: center;
    gap: 3px;
    color: #44546c;
}
.label-plain {
    color: #5a7192;
    padding-right: 0;
}

/* work area */
.work {
    position: relative;
    flex: 1;
    min-height: 0;
    display: flex;
    background: linear-gradient(#a7c2e6, #7c9ecb 30%, #5c87bd 66%, #6793cd);
}
.swoosh {
    position: absolute;
    left: 0;
    top: 0;
    width: 700px;
    height: 120px;
    clip-path: polygon(0 0, 100% 0, 100% 15px, 290px 30px, 200px 40px, 100px 55px, 60px 72px, 18px 95px, 0 105px);
    background: linear-gradient(90deg, rgba(255, 255, 255, 0.16), rgba(255, 255, 255, 0.08) 50%, rgba(255, 255, 255, 0));
}
.left-rail {
    position: relative;
    width: 311px;
    flex-shrink: 0;
    padding: 4px 0 0 3px;
}
.tab-stop {
    width: 15px;
    height: 15px;
    border: 1px solid #7391bd;
    background: #d9e6f6;
    display: flex;
    align-items: center;
    justify-content: center;
}
.tab-stop span {
    width: 5px;
    height: 5px;
    border-left: 2px solid #222;
    border-bottom: 2px solid #222;
}
.vruler {
    position: absolute;
    left: 3px;
    top: 20px;
    width: 15px;
    height: 515px;
    padding-top: 7px;
    display: flex;
    flex-direction: column;
    background: linear-gradient(#bcd1ec 0, #bcd1ec 468px, #fff 468px);
    border-left: 1px solid #cfdef2;
    border-right: 1px solid #a8c0df;
    font-family: "Liberation Sans", sans-serif;
    font-size: 9px;
    color: #5b6b80;
}
.vruler span {
    height: 26.67px;
    flex-shrink: 0;
    writing-mode: vertical-rl;
    transform: rotate(180deg);
    display: flex;
    align-items: center;
    justify-content: center;
    gap: 4px;
}
.vruler span::before, .vruler span::after {
    content: "";
    height: 1px;
    width: 3px;
    background: #6c7b90;
}
.doc-col {
    width: 955px;
    flex-shrink: 0;
    overflow: hidden;
}
.hruler {
    position: relative;
    width: 662px;
    height: 13px;
    margin-top: 4px;
    margin-bottom: 3px;
    padding-left: 5px;
    display: flex;
    background: linear-gradient(90deg, #b2cbea 63px, #fff 63px, #fff 598px, #b2cbea 598px);
    font-family: "Liberation Sans", sans-serif;
    font-size: 9px;
    color: #5b6b80;
    line-height: 13px;
}
.hruler span {
    width: 23.3px;
    flex-shrink: 0;
    display: flex;
    align-items: center;
    justify-content: center;
    gap: 3px;
}
.hruler span::before, .hruler span::after {
    content: "";
    width: 1px;
    height: 3px;
    background: #6c7b90;
}
.marker {
    position: absolute;
}
.marker-indent {
    left: 58px;
    top: -2px;
}
.marker-tab1 {
    left: 292px;
    top: 8px;
}
.marker-tab2 {
    left: 521px;
    top: 8px;
}
.marker-right {
    left: 593px;
    top: 5px;
}

/* page */
.page {
    width: 662px;
    height: 515px;
    background: #fefefe;
    box-shadow: 1px 2px 3px rgba(40, 60, 90, 0.7);
    display: flex;
    flex-direction: column;
}
.body-part {
    position: relative;
    padding-left: 57px;
    height: 424px;
    flex-shrink: 0;
}
.sheet {
    width: 551px;
    height: 424px;
    border-collapse: collapse;
    table-layout: fixed;
    border-left: 2px solid #8f9491;
    border-right: 2px solid #8f9491;
    border-bottom: 3px solid #8f9491;
}
.col-head {
    width: 62px;
}
.sheet td {
    padding: 0 0 0 5px;
    vertical-align: top;
}
.row-top {
    height: 185px;
}
.row-top td {
    padding-top: 3px;
    border-bottom: 1px solid #9a9e9b;
}
.row-sign {
    height: 141px;
}
.row-sign td {
    padding-top: 9px;
    border-bottom: 1px solid #9a9e9b;
}
.mark {
    height: 17.3px;
    line-height: 17.3px;
    font-family: "DejaVu Sans", sans-serif;
    font-size: 10px;
    color: #777;
}
.row-sign .mark {
    height: 17.6px;
    line-height: 17.6px;
}
.sign-title {
    height: 18px;
    line-height: 18px;
    color: #989898;
    font-size: 10.500px;
    letter-spacing: 0.6px;
}
.sign-title i, .note-head i, .note-cell i, .row-end {
    font-family: "DejaVu Sans", sans-serif;
    font-size: 10px;
    color: #777;
}
.row-note td {
    vertical-align: middle;
}
td.note-head {
    padding-left: 16px;
    padding-bottom: 4px;
    color: #888;
    font-size: 11px;
    white-space: nowrap;
    border-right: 1px solid #9a9e9b;
}
td.note-cell {
    padding-left: 5px;
    padding-bottom: 4px;
}
.row-end {
    position: absolute;
    left: 610px;
}
.end-sign {
    top: 188px;
}
.end-note {
    top: 329px;
}

/* footer of page */
.footer-part {
    position: relative;
    flex: 1;
}
.footer-tab {
    position: absolute;
    left: 7px;
    top: -4px;
    width: 28px;
    height: 15px;
    line-height: 14px;
    text-align: center;
    color: #4b6a96;
    font-size: 10px;
    background: #d3e0f1;
    border: 1px solid #a7bcd8;
    border-bottom: none;
    border-radius: 3px 3px 0 0;
}
.footer-rule {
    position: absolute;
    left: 0;
    right: 0;
    top: 11px;
    border-top: 1px dashed #8ea2c4;
}
.caret {
    position: absolute;
    left: 63px;
    top: 12px;
    height: 12px;
    border-left: 1px solid #999;
}
.footer-text {
    position: absolute;
    left: 540px;
    top: 24px;
    color: #333;
    font-size: 9px;
    line-height: 13px;
}

/* scrollbar */
.scrollbar {
    position: absolute;
    right: 0;
    top: 0;
    bottom: 0;
    width: 14px;
    display: flex;
    flex-direction: column;
    align-items: center;
    background: #7b9dc9;
    border-left: 1px solid #9dbce2;
}
.split {
    width: 100%;
    height: 5px;
    background: #b4cbe8;
    border-bottom: 2px solid #5a78a4;
}
.ruler-toggle {
    width: 100%;
    height: 13px;
    background: #d5dfec;
    display: flex;
    align-items: center;
    justify-content: center;
}
.sb-arrow {
    margin-top: 6px;
    width: 0;
    height: 0;
    border-left: 4px solid transparent;
    border-right: 4px solid transparent;
    border-bottom: 3px solid #3a5580;
}
.sb-track-top {
    flex: 0 0 214px;
}
.sb-thumb {
    width: 100%;
    flex: 0 0 252px;
    background: linear-gradient(90deg, #c8d4e3, #eff3f8 35%, #e6ebf2 70%, #bac8da);
    border: 1px solid #d8e1ee;
}
.sb-down {
    width: 100%;
    height: 15px;
    background: #6c8fbf;
    display: flex;
    align-items: center;
    justify-content: center;
}
.sb-down i {
    border-left: 4px solid transparent;
    border-right: 4px solid transparent;
    border-top: 4px solid #2e466d;
}
.sb-dot {
    height: 13.5px;
    display: flex;
    align-items: center;
}

/* oCam */
.ocam {
    position: absolute;
    left: 797px;
    top: 369px;
    width: 373px;
    height: 106px;
    display: flex;
    flex-direction: column;
    background: #3a3a38;
    padding: 0 4px 4px 4px;
    border-radius: 2px;
    box-shadow: 0 1px 2px rgba(20, 30, 50, 0.6);
    z-index: 4;
}
.ocam-title {
    height: 17px;
    margin: 0 -4px;
    padding: 0 4px;
    display: flex;
    align-items: center;
    gap: 3px;
    color: #f0f0f0;
    font-family: "Liberation Sans", sans-serif;
    font-size: 9.500px;
    font-weight: 700;
    white-space: nowrap;
    position: relative;
    background: linear-gradient(#2f2f2d, #4c4b46);
    border-radius: 2px 2px 0 0;
}
.ocam-min {
    position: absolute;
    right: 22px;
    top: 8px;
    width: 6px;
    height: 1px;
    background: #ddd;
}
.ocam-close {
    position: absolute;
    right: 5px;
    top: 4px;
}
.ocam-menu {
    height: 20px;
    padding-left: 5px;
    display: flex;
    align-items: center;
    gap: 20px;
    font-size: 10px;
    color: #2b2b2b;
    background: linear-gradient(#ecebe7, #c9c7c1);
}
.ocam-tools {
    height: 57px;
    padding-left: 11px;
    display: flex;
    background: #e6e3de;
    border-top: 1px solid #f5f4f1;
}
.ocam-btn {
    display: flex;
    flex-direction: column;
    align-items: center;
    font-size: 10px;
    color: #333;
    line-height: 13px;
    white-space: nowrap;
}
.ocam-btn svg {
    margin-bottom: 1px;
}
.btn-stop {
    width: 32px;
}
.btn-pause {
    width: 26px;
    margin-left: 17px;
}
.btn-pause svg {
    margin-top: 1px;
    margin-bottom: 0;
}
.btn-screen {
    width: 40px;
    margin-left: 10px;
}
.btn-screen svg {
    margin-bottom: 0;
}
.ocam-status {
    margin-left: 7px;
    font-family: "Open Sans", "DejaVu Sans", sans-serif;
    color: #111;
}
.ocam-time {
    font-size: 23px;
    line-height: 28px;
}
.ocam-size {
    font-size: 13px;
    line-height: 14px;
}
.ocam-strip {
    height: 8px;
    background: #fbfbfb;
}
.cursor {
    position: absolute;
    left: 1138px;
    top: 374px;
    z-index: 5;
}

/* input method bar */
.sogou {
    position: absolute;
    left: 921px;
    top: 503px;
    width: 138px;
    height: 16px;
    padding-left: 20px;
    display: flex;
    align-items: center;
    gap: 4.500px;
    background: linear-gradient(90deg, transparent 16px, #f1f5fa 16px);
    color: #1d6cb5;
    z-index: 3;
}
.sogou-logo {
    position: absolute;
    left: 0;
    top: -2px;
    width: 18px;
    height: 18px;
    border-radius: 4px;
    background: #e2562a;
    color: #fff;
    font-family: "Liberation Sans", sans-serif;
    font-weight: 700;
    font-size: 15px;
    line-height: 18px;
    text-align: center;
    transform: rotate(-8deg);
}
.sogou-cn {
    font-size: 11px;
    font-weight: 700;
    line-height: 16px;
}

/* network meter */
.net {
    position: absolute;
    left: 1117px;
    top: 492px;
    width: 84px;
    height: 25px;
    display: flex;
    align-items: center;
    background: linear-gradient(#f1f3f6, #cfd5de);
    border-radius: 14px;
    box-shadow: 0 2px 3px rgba(20, 40, 70, 0.5);
    z-index: 3;
}
.net-ball {
    width: 30px;
    height: 30px;
    flex-shrink: 0;
    border-radius: 50%;
    border: 1px solid #e8f4ea;
    box-shadow: 0 0 0 1px #3e9a68;
    background: linear-gradient(#2fa766 0, #2fa766 18%, #58c878 20%, #4ec271);
    color: #e4f5e8;
    font-family: "Liberation Sans", sans-serif;
    font-size: 10px;
    line-height: 28px;
    text-align: center;
}
.net-rates {
    margin-left: 5px;
    width: 31px;
    display: flex;
    flex-direction: column;
    font-family: "Liberation Sans", sans-serif;
    font-size: 6.500px;
    line-height: 10px;
    color: #333;
    white-space: nowrap;
}
.net-rates span {
    display: flex;
    justify-content: space-between;
}
.net-rates i {
    font-family: "DejaVu Sans", sans-serif;
    font-size: 8px;
    font-weight: 700;
}
.up {
    color: #d2423a;
}
.down {
    color: #3c9a58;
}
.net-plus {
    position: relative;
    margin-left: 3px;
    width: 13px;
    height: 13px;
    border-radius: 50%;
    background: #3f7fd0;
    color: #fff;
    font-family: "Liberation Sans", sans-serif;
    font-weight: 700;
    font-size: 11px;
    line-height: 13px;
    text-align: center;
}
.net-plus::after {
    content: "";
    position: absolute;
    right: -1px;
    top: -2px;
    width: 5px;
    height: 5px;
    border-radius: 50%;
    background: #cf4a48;
}

/* status bar */
.status {
    height: 18px;
    flex-shrink: 0;
    display: flex;
    align-items: center;
    padding-bottom: 1px;
    background: linear-gradient(#c8dcf5, #b3cfef);
    border-top: 1px solid #e0ecfa;
    color: #3d4f6c;
    font-size: 10px;
    position: relative;
}
.st {
    height: 100%;
    display: flex;
    align-items: center;
    border-right: 1px solid #a8c2e2;
    white-space: nowrap;
}
.st-page {
    width: 53px;
    padding-left: 5px;
}
.st-count {
    width: 49px;
    padding-left: 6px;
}
.st-check {
    width: 30px;
    padding-left: 5px;
    border-right: none;
}
.st-lang {
    width: 83px;
}
.st-insert {
    width: 55px;
    padding-left: 6px;
    gap: 12px;
}
.st-right {
    position: absolute;
    left: 1052px;
    right: 0;
    top: 0;
    bottom: 0;
    display: flex;
    align-items: center;
}
.views {
    display: flex;
    height: 100%;
    width: 75px;
}
.view {
    width: 15px;
    display: flex;
    align-items: center;
    justify-content: center;
}
.view-on {
    background: linear-gradient(#fbe4ac, #f7cf7a);
}
.zoom-pct {
    width: 34px;
    margin-left: 6px;
    font-family: "Liberation Sans", sans-serif;
    font-size: 11px;
}
.zoom-btn {
    width: 13px;
    height: 13px;
    margin-left: -1px;
    border-radius: 50%;
    border: 1px solid #7a8aa1;
    background: #e2ebf6;
    font-family: "Liberation Sans", sans-serif;
    font-size: 11px;
    font-weight: 700;
    line-height: 10px;
    text-align: center;
    color: #3d4f6c;
}
.zoom-slider {
    width: 85px;
    height: 12px;
    padding-left: 39px;
    background: linear-gradient(#8fa8c8, #8fa8c8) center / 100% 1px no-repeat;
}
```
